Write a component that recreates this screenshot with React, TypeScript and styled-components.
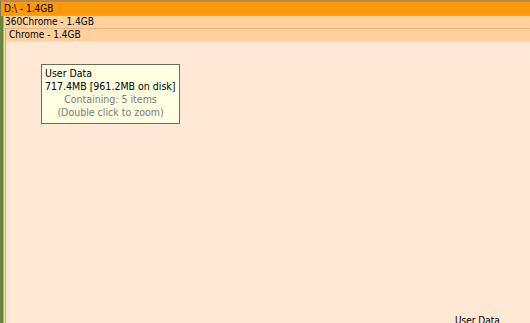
import React from "react";
import styled, { createGlobalStyle } from "styled-components";

const Global = createGlobalStyle`
  html, body { margin: 0; padding: 0; overflow: hidden; background: #ffe8d4; }
  * { box-sizing: border-box; }
`;

const Canvas = styled.div`
  position: relative;
  width: 530px;
  height: 323px;
  overflow: hidden;
  font-family: "Liberation Sans", Arial, sans-serif;
  font-size: 11px;
`;

const DriveFrame = styled.div`
  display: flex;
  flex-direction: column;
  height: 100%;
  border-top: 2px solid #b88a4c;
  border-left: 1px solid #7e7a4a;
`;

const Header = styled.div<{ $bg: string; $line: string; $indent: number; $h: number }>`
  height: ${(p) => p.$h}px;
  line-height: ${(p) => p.$h - 1}px;
  background: ${(p) => p.$bg};
  border-bottom: 1px solid ${(p) => p.$line};
  padding-left: ${(p) => p.$indent}px;
  color: #000;
  white-space: nowrap;
  font-family: "DejaVu Sans Condensed", "DejaVu Sans", sans-serif;
  font-size: 10px;
`;

const BodyRow = styled.div`
  flex: 1;
  display: flex;
  min-height: 0;
`;

const Strip = styled.div<{ $w: number; $bg: string }>`
  width: ${(p) => p.$w}px;
  flex: none;
  background: ${(p) => p.$bg};
`;

const DirFrame = styled.div<{ $left: string }>`
  flex: 1;
  display: flex;
  flex-direction: column;
  border-left: 1px solid ${(p) => p.$left};
  min-width: 0;
`;

const Body = styled.div`
  position: relative;
  flex: 1;
  background: #ffe8d4;
`;

const Tooltip = styled.div`
  position: absolute;
  left: 41px;
  top: 64px;
  width: 139px;
  height: 60px;
  background: #ffffe1;
  border: 1px solid #6b6b5a;
  padding: 2px 0 0 3px;
  font-family: "DejaVu Sans Condensed", "DejaVu Sans", sans-serif;
  font-size: 10.5px;
  line-height: 13px;
  color: #000;
`;

const TipLine = styled.div<{ $muted?: boolean }>`
  white-space: nowrap;
  color: ${(p) => (p.$muted ? "#7a7a7a" : "#000")};
  text-align: ${(p) => (p.$muted ? "center" : "left")};
  padding-right: ${(p) => (p.$muted ? "3px" : "0")};
`;

const CornerLabel = styled.div`
  position: absolute;
  left: 455px;
  top: 314px;
  font-family: "DejaVu Sans Condensed", "DejaVu Sans", sans-serif;
  font-size: 10px;
  line-height: 13px;
  color: #000;
  white-space: nowrap;
`;

export default function App() {
  return (
    <>
      <Global />
      <Canvas>
        <DriveFrame>
          <Header $bg="#ff9a0a" $line="#e3a247" $indent={3} $h={14}>
            D:\ - 1.4GB
          </Header>
          <BodyRow>
            <Strip $w={2} $bg="#3e9a2e" />
            <DirFrame $left="#f0a040">
              <Header $bg="#ffd19f" $line="#efb77e" $indent={1} $h={13}>
                360Chrome - 1.4GB
              </Header>
              <BodyRow>
                <Strip $w={1} $bg="#ffd6a8" />
                <DirFrame $left="#e9a866">
                  <Header $bg="#ffd19f" $line="#ffd9b0" $indent={3} $h={13}>
                    Chrome - 1.4GB
                  </Header>
                  <Body />
                </DirFrame>
              </BodyRow>
            </DirFrame>
          </BodyRow>
        </DriveFrame>
        <Tooltip>
          <TipLine>User Data</TipLine>
          <TipLine>717.4MB [961.2MB on disk]</TipLine>
          <TipLine $muted>Containing: 5 items</TipLine>
          <TipLine $muted>(Double click to zoom)</TipLine>
        </Tooltip>
        <CornerLabel>User Data</CornerLabel>
      </Canvas>
    </>
  );
}
